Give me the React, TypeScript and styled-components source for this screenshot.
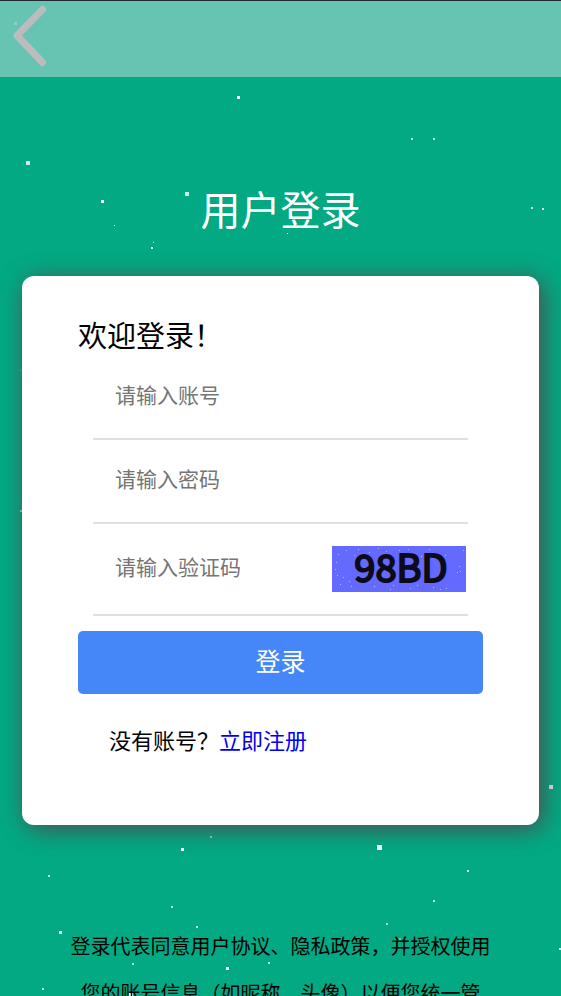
import React from "react";
import styled, { createGlobalStyle } from "styled-components";

const GlobalStyle = createGlobalStyle`
  * { box-sizing: border-box; }
  html, body, #root { height: 100%; }
  body {
    margin: 0;
    overflow: hidden;
    background: #02a983;
    font-family: "Noto Sans CJK SC", sans-serif;
    color: #000;
  }
`;

const Page = styled.div`
  position: relative;
  height: 100%;
  overflow: hidden;
`;

const Snow = styled.svg`
  position: absolute;
  inset: 0;
  width: 100%;
  height: 100%;
  pointer-events: none;
`;

const Content = styled.div`
  position: relative;
  display: flex;
  flex-direction: column;
`;

const TopBar = styled.header`
  display: flex;
  height: 77px;
  padding: 4px 12px;
  border-top: 1px solid #1f2a33;
  background: rgba(204, 224, 228, 0.5);
`;

const BackButton = styled.button`
  width: 36px;
  height: 64px;
  padding: 0;
  border: 0;
  background: none;
  cursor: pointer;

  svg { display: block; }
`;

const Title = styled.h1`
  margin: 101px 0 0;
  color: #fff;
  font-size: 40px;
  font-weight: 400;
  line-height: 60px;
  text-align: center;
`;

const Card = styled.main`
  margin: 38px 22px 0;
  padding: 38px 56px 70px;
  border-radius: 12px;
  background: #fff;
  box-shadow: 4px 4px 24px #4c4c4c;
`;

const Welcome = styled.h2`
  margin: 0;
  font-size: 29px;
  font-weight: 400;
  line-height: 40px;
`;

const Fields = styled.div`
  display: flex;
  flex-direction: column;
  margin: 2px 15px 0;
`;

const Field = styled.div<{ $tall?: boolean }>`
  display: flex;
  align-items: center;
  height: ${(p) => (p.$tall ? 92 : 84)}px;
  padding-left: 22px;
  border-bottom: 2px solid #e0e0e0;
`;

const TextBox = styled.input`
  flex: 1;
  min-width: 0;
  height: 46px;
  padding: 0 0 6px;
  border: 0;
  outline: 0;
  background: none;
  color: #000;
  font: 400 21px "Noto Sans CJK SC", sans-serif;

  &::placeholder { color: #757575; opacity: 1; }
`;

const Captcha = styled.svg`
  flex: none;
  width: 134px;
  height: 46px;
  margin-right: 2px;
  overflow: visible;
`;

const Submit = styled.button`
  display: block;
  width: 100%;
  height: 63px;
  margin-top: 15px;
  padding: 0 0 6px;
  border: 0;
  border-radius: 5px;
  background: #4587f8;
  color: #fff;
  font: 400 25px "Noto Sans CJK SC", sans-serif;
  cursor: pointer;
`;

const Register = styled.p`
  margin: 29px 31px 0;
  font-size: 22px;
  line-height: 32px;
`;

const RegisterLink = styled.a`
  color: #0000ee;
  text-decoration: none;
`;

const Agreement = styled.p`
  margin: 97px 68px 0;
  font-size: 20px;
  line-height: 47px;
  text-align: center;
`;

/* x, y, size, opacity */
const flakes: number[][] = [
  [14, 22, 3, 0.3],
  [237, 96, 3, 1], [411, 138, 2, 0.8], [433, 138, 2, 0.8], [26, 161, 4, 0.8],
  [101, 200, 3, 1], [185, 192, 4, 0.8], [114, 225, 1, 0.9], [153, 242, 1, 0.8],
  [151, 247, 2, 0.9], [287, 233, 1, 0.9], [531, 207, 2, 0.7], [542, 208, 2, 0.8],
  [20, 370, 1, 0.4], [20, 510, 2, 0.6], [549, 785, 4, 0.9], [210, 836, 2, 0.6],
  [181, 848, 3, 1], [377, 845, 5, 1], [48, 875, 2, 0.8], [467, 870, 2, 0.9],
  [171, 906, 2, 0.8], [433, 900, 2, 0.8], [196, 926, 2, 0.8], [386, 923, 2, 0.6],
  [59, 931, 3, 1], [226, 942, 2, 0.4], [399, 938, 2, 0.4], [559, 948, 2, 0.9],
  [132, 963, 2, 0.7], [226, 967, 3, 1], [268, 962, 2, 0.8], [42, 988, 2, 0.8],
  [129, 993, 4, 1],
];

const specks: number[][] = [
  [6, 8], [4, 16], [3, 23], [5, 29], [8, 38], [11, 31], [14, 4], [17, 35], [19, 40],
  [22, 9], [26, 3], [32, 34], [37, 6], [42, 40], [46, 2], [54, 5], [58, 43], [61, 39],
  [67, 4], [73, 7], [76, 3], [78, 42], [85, 39], [89, 10], [97, 3], [101, 41],
  [108, 43], [113, 9], [114, 42], [125, 26], [127, 20], [128, 25], [131, 4],
];

export default function App() {
  return (
    <Page>
      <GlobalStyle />
      <Snow aria-hidden="true" shapeRendering="crispEdges">
        {flakes.map(([x, y, size, opacity]) => (
          <rect key={`${x}-${y}`} x={x} y={y} width={size} height={size} fill="#fff" opacity={opacity} />
        ))}
      </Snow>
      <Content>
        <TopBar>
          <BackButton type="button" aria-label="返回">
            <svg width="36" height="64" viewBox="0 0 36 64" fill="none">
              <path
                d="M30.5 4.5L5 30.5L30.5 57.5"
                stroke="#bcbcbc"
                strokeWidth="7"
                strokeLinecap="round"
                strokeLinejoin="round"
              />
            </svg>
          </BackButton>
        </TopBar>
        <Title>用户登录</Title>
        <Card>
          <Welcome>欢迎登录！</Welcome>
          <form onSubmit={(e) => e.preventDefault()}>
            <Fields>
              <Field>
                <TextBox type="text" aria-label="账号" placeholder="请输入账号" />
              </Field>
              <Field>
                <TextBox type="password" aria-label="密码" placeholder="请输入密码" />
              </Field>
              <Field $tall>
                <TextBox type="text" aria-label="验证码" placeholder="请输入验证码" />
                <Captcha viewBox="0 0 134 46" role="img" aria-label="98BD">
                  <rect width="134" height="46" fill="#6469ff" />
                  {specks.map(([x, y]) => (
                    <rect key={`${x}-${y}`} x={x} y={y} width="1" height="1" fill="#a2bcff" />
                  ))}
                  <text
                    x="69"
                    y="36"
                    textAnchor="middle"
                    fill="#0c0c18"
                    stroke="#0c0c18"
                    strokeWidth="2"
                    fontFamily='"Noto Sans CJK SC", sans-serif'
                    fontSize="38"
                    fontWeight="400"
                  >
                    98BD
                  </text>
                </Captcha>
              </Field>
            </Fields>
            <Submit type="submit">登录</Submit>
          </form>
          <Register>
            没有账号？<RegisterLink href="#register">立即注册</RegisterLink>
          </Register>
        </Card>
        <Agreement>登录代表同意用户协议、隐私政策，并授权使用您的账号信息（如昵称、头像）以便您统一管</Agreement>
      </Content>
    </Page>
  );
}
